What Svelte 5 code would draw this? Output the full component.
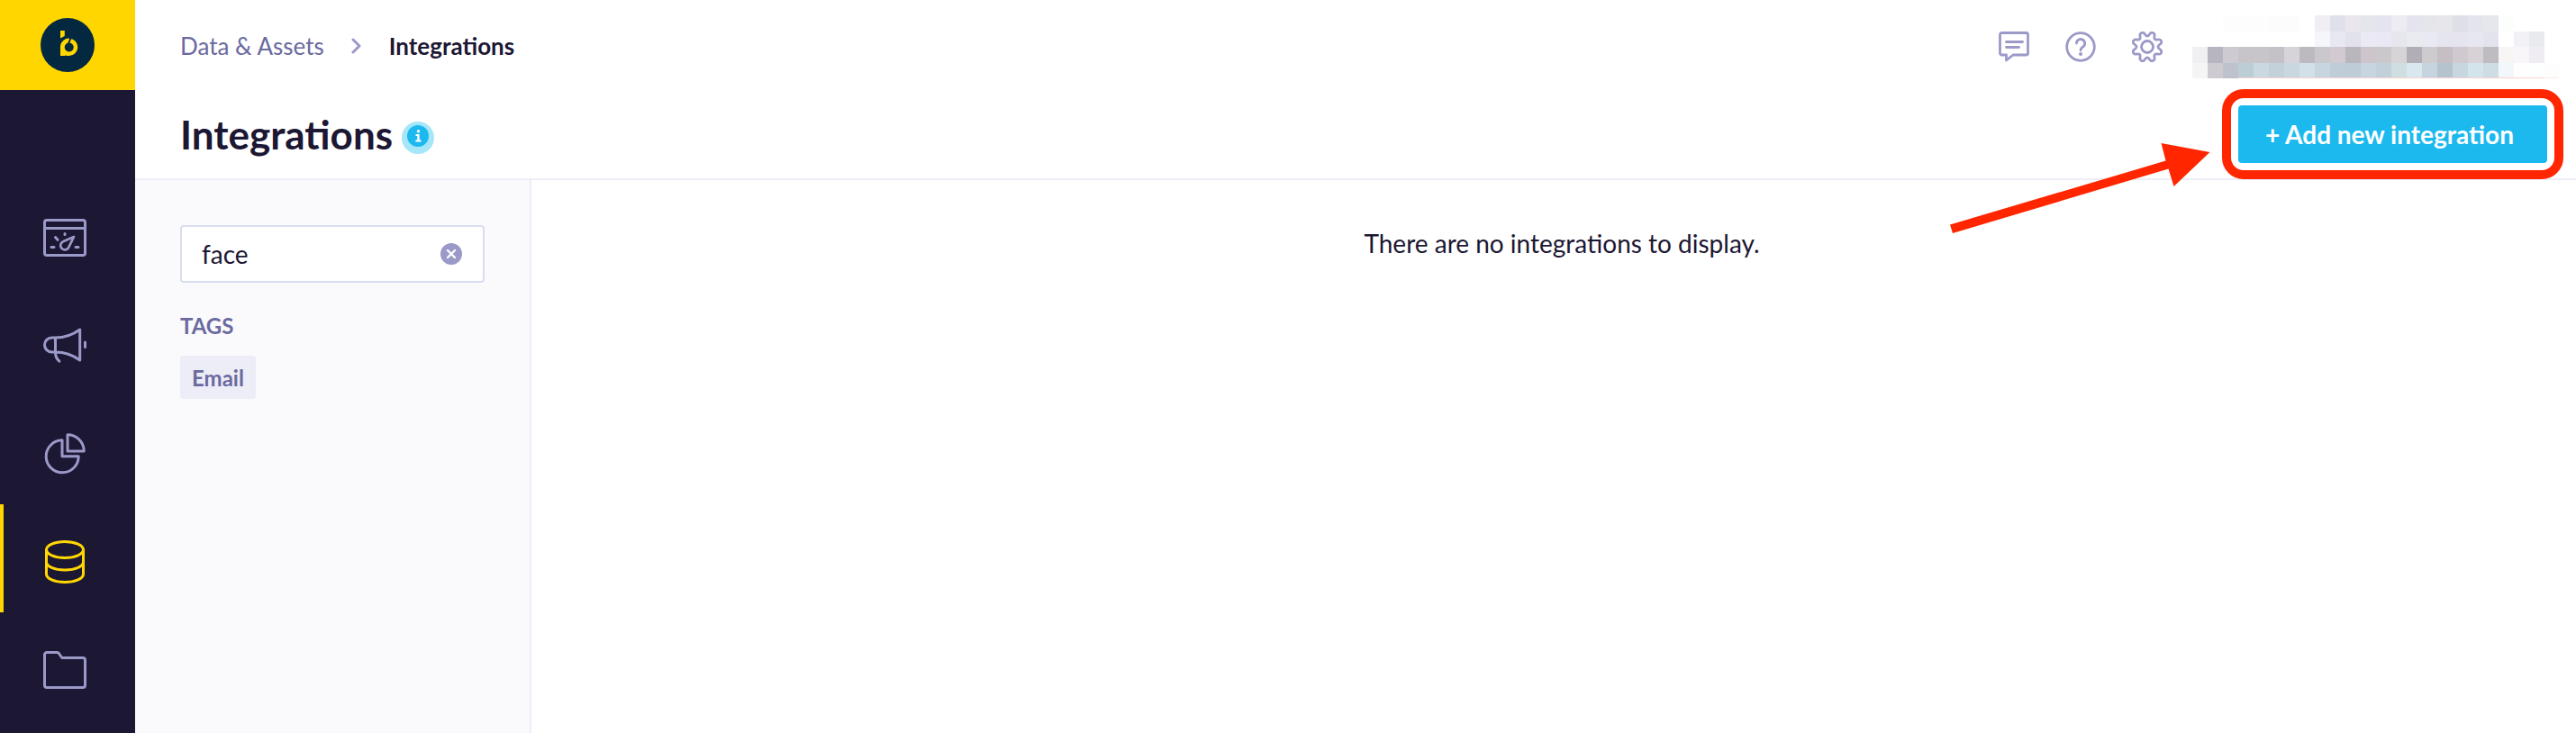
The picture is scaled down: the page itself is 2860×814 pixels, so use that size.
<script lang="ts">
  let search = $state('face');

  const tags = ['Email'];

  const navItems = [
    { id: 'dashboards', label: 'Dashboards' },
    { id: 'campaigns', label: 'Campaigns' },
    { id: 'analyses', label: 'Analyses' },
    { id: 'data', label: 'Data & Assets' },
    { id: 'files', label: 'Asset manager' }
  ];
  const active = 'data';

  // Redacted account name: one row of colours per line of blocks
  const blocks = [
    '- - fdfdfd fdfdfd fdfdfd fcfcfc fcfcfc - f0eef3 e0e0ea e9e7ed e5e6eb e3e4ee edecf2 e3e4ed e5e6eb e6e6eb dfdfe8 e4e4ef e6e7ec fcfefe - - -',
    '- - - - - - - - f5f6fb e8e8f2 e2e2ed eae9f4 e9e8f4 e6e6ef eaebf0 e9e9f3 e5e5f0 e5e4ef e7e7f2 e3e3ed - f2f1f7 e8eaee -',
    'f0f0f2 b7b5c0 cdcad1 c8c5ca c8c5ca c5c1c9 d6d4d8 bdb9c1 cbc8cd d1cad0 b9b6bd ccc5cc cac8cb d8d3d7 b1aeb6 cdcbce c5bec5 d0cad0 d8d2d6 bebcc1 f7f6f5 f8f6fa efedf3 -',
    'f5f5f5 cecbd0 bec2cc bccdd5 cad8e1 c2d1da c9d7e0 d2e0e7 c7d5df bfcdd9 bfccd8 c6d5df c1d0d9 d0dee2 d9e8ef c5d4de b5c3cf c8d6e0 d4e4eb cedde3 f1f7fa fefefe fdfefe fdfdfd'
  ].map((row) => row.split(' '));

  function gearPath(c: number) {
    const pts: number[][] = [];
    for (let i = 0; i < 8; i++) {
      const mid = i * 45 + 22.5;
      for (const [offset, r] of [[-8, 17], [8, 17], [16, 12], [29, 12]]) {
        const a = ((mid + offset) * Math.PI) / 180;
        pts.push([c + r * Math.cos(a), c + r * Math.sin(a)]);
      }
    }
    const half = (a: number[], b: number[]) => `${(a[0] + b[0]) / 2} ${(a[1] + b[1]) / 2}`;
    let d = `M${half(pts[pts.length - 1], pts[0])}`;
    pts.forEach((p, i) => {
      d += `Q${p[0]} ${p[1]} ${half(p, pts[(i + 1) % pts.length])}`;
    });
    return d + 'Z';
  }
</script>

<svelte:head>
  <title>Integrations</title>
</svelte:head>

<div class="app">
  <aside class="sidebar">
    <a class="sidebar__logo" href="#home" aria-label="Home">
      <svg width="60" height="60" viewBox="0 0 60 60">
        <circle cx="30" cy="30" r="30" fill="#032840" />
        <path d="M22 14h4.8v6L22 22.4z" fill="#ffd600" />
        <path d="M22 42V31a9.7 9.7 0 1 1 9.7 11z" fill="#ffd600" />
        <circle cx="31.7" cy="32.5" r="5" fill="#032840" />
        <path d="M31 28.5l2.6-6.5" stroke="#032840" stroke-width="2" />
        <path d="M27 42.5l1-1.5 1 1.5z" fill="#032840" />
      </svg>
    </a>

    <nav class="nav" aria-label="Main">
      {#each navItems as item}
        <a class="nav__item" class:nav__item--active={item.id === active} href="#{item.id}" aria-label={item.label}>
          <svg width="48" height="48" viewBox="0 0 48 48" fill="none" stroke="currentColor" stroke-width="3" stroke-linecap="round" stroke-linejoin="round">
            {#if item.id === 'dashboards'}
              <rect x="1.5" y="4.5" width="45" height="39" rx="2.5" />
              <path d="M2 13.5h44M9 34.5h3M36 34.5h3M24 19.5v1M13.5 23.5l2.5 2.8" />
              <path d="M34 23L22 28.2a4.8 4.8 0 1 0 6 7z" stroke-width="2.7" />
            {:else if item.id === 'campaigns'}
              <path d="M13.5 15h-4a8 8 0 0 0 0 16h4M13.5 15v16M13.5 15c10 0 19-3 27.2-9v34c-8.2-6-17.2-9-27.2-9 0 5 1.5 8 4.5 10.2M46.5 20v5.5" />
            {:else if item.id === 'analyses'}
              <path d="M21 8.8a18 18 0 1 0 18.2 18H21z" />
              <path d="M27 2.8A18.2 18.2 0 0 1 45.2 21H27z" />
            {:else if item.id === 'data'}
              <ellipse cx="24" cy="10.5" rx="20.5" ry="9" />
              <path d="M3.5 10.5v27c0 5 9 9 20.5 9s20.5-4 20.500-9v-27M3.5 24c0 5 9 9 20.5 9s20.5-4 20.500-9" />
            {:else}
              <path d="M1.5 7A2.5 2.5 0 0 1 4 4.5h11.5q1 0 1.8 1l3.5 5H44a2.5 2.5 0 0 1 2.500 2.500v28a2.5 2.5 0 0 1-2.500 2.500H4a2.5 2.5 0 0 1-2.500-2.500z" />
            {/if}
          </svg>
        </a>
      {/each}
    </nav>
  </aside>

  <div class="page">
    <header class="header">
      <div class="topbar">
        <nav class="breadcrumbs" aria-label="Breadcrumb">
          <a href="#data">Data &amp; Assets</a>
          <svg width="12" height="18" viewBox="0 0 12 18" fill="none" stroke="#9b99c8" stroke-width="3" stroke-linecap="round" stroke-linejoin="round">
            <path d="M2 2l7 7-7 7" />
          </svg>
          <span class="breadcrumbs__current" aria-current="page">Integrations</span>
        </nav>

        <div class="toolbar">
          <button type="button" class="icon-btn" aria-label="Feedback">
            <svg width="34" height="34" viewBox="0 0 34 34" fill="none" stroke="currentColor" stroke-width="2.8" stroke-linecap="round" stroke-linejoin="round">
              <path d="M3.5 1.5h27a2 2 0 0 1 2 2V24a2 2 0 0 1-2 2H16l-7.5 6V26h-5a2 2 0 0 1-2-2V3.5a2 2 0 0 1 2-2zM8.5 11.5h18M8.5 17.5h14" />
            </svg>
          </button>
          <button type="button" class="icon-btn" aria-label="Help">
            <svg width="34" height="34" viewBox="0 0 34 34" fill="none" stroke="currentColor" stroke-width="2.8" stroke-linecap="round">
              <circle cx="17" cy="17" r="15.3" />
              <path d="M12.500 13a4.6 4.6 0 1 1 6.800 4.200q-2.300 1.300-2.300 3.600" />
              <circle cx="17" cy="25" r="2" fill="currentColor" stroke="none" />
            </svg>
          </button>
          <button type="button" class="icon-btn" aria-label="Settings">
            <svg width="34" height="34" viewBox="0 0 34 34" fill="none" stroke="currentColor" stroke-width="2.8" stroke-linejoin="round">
              <path d={gearPath(17)} />
              <circle cx="17" cy="17" r="6.5" />
            </svg>
          </button>
          <svg class="account" width="408" height="70" viewBox="0 0 408 70" role="img" aria-label="Account" shape-rendering="crispEdges">
            {#each blocks as row, y}
              {#each row as color, x}
                {#if color !== '-'}
                  <rect x={x * 17} y={y * 17.5} width="17" height="17.5" fill="#{color}" />
                {/if}
              {/each}
            {/each}
            <rect x="51" y="69" width="340" height="1" fill="#f6d3cf" />
            <rect x="391" y="69" width="15" height="1" fill="#fde8e5" />
          </svg>
        </div>
      </div>

      <div class="titlebar">
        <h1>Integrations</h1>
        <button type="button" class="info" aria-label="About integrations">
          <svg width="36" height="36" viewBox="0 0 36 36">
            <circle cx="18" cy="18" r="18" fill="#a6e6f9" />
            <circle cx="18" cy="16" r="12" fill="#1cb9ef" />
            <circle cx="18.5" cy="10.8" r="1.7" fill="#fff" />
            <path d="M15.5 14h4.200v6.600h1.900v2h-6.200v-2h1.900V16h-1.800z" fill="#fff" />
          </svg>
        </button>

        <div class="add">
          <button type="button" class="add__btn">+ Add new integration</button>
          <span class="add__frame"></span>
          <svg class="add__arrow" width="289" height="100" viewBox="0 0 289 100" aria-hidden="true">
            <path d="M0 90.5L239.5 19.5 234.5 0 288.5 10 248.5 48 242.5 28.5 3 100z" fill="#ff2600" />
          </svg>
        </div>
      </div>
    </header>

    <div class="content">
      <section class="filters" aria-label="Filters">
        <div class="search">
          <input type="text" aria-label="Search integrations" bind:value={search} />
          <button type="button" class="search__clear" aria-label="Clear search" onclick={() => (search = '')}>
            <svg width="24" height="24" viewBox="0 0 24 24">
              <circle cx="12" cy="12" r="12" fill="#9b99c8" />
              <path d="M8 8l8 8M16 8l-8 8" stroke="#fff" stroke-width="2.4" stroke-linecap="round" />
            </svg>
          </button>
        </div>

        <h2>TAGS</h2>
        <div class="tags">
          {#each tags as tag}
            <button type="button" class="tag">{tag}</button>
          {/each}
        </div>
      </section>

      <main class="results">
        <p>There are no integrations to display.</p>
      </main>
    </div>
  </div>
</div>

<style>
  :global(body) {
    margin: 0;
  }

  .app {
    display: flex;
    min-height: 100vh;
    font-family: Lato, sans-serif;
    font-size: 28px;
    color: #1c1733;
    background: #fff;
  }

  button,
  input {
    font: inherit;
    color: inherit;
    box-sizing: border-box;
  }

  button {
    padding: 0;
    border: 0;
    background: none;
    cursor: pointer;
  }

  svg {
    display: block;
  }

  /* Sidebar */
  .sidebar {
    flex: 0 0 150px;
    background: #1c1733;
  }

  .sidebar__logo {
    display: flex;
    align-items: center;
    justify-content: center;
    height: 100px;
    margin-bottom: 100px;
    background: #ffd600;
  }

  .nav__item {
    display: block;
    padding: 40px 0 32px 44px;
    border-left: 4px solid transparent;
    color: #9b99c8;
  }

  .nav__item--active {
    border-left-color: #ffd600;
    color: #ffd600;
  }

  .page {
    display: flex;
    flex: 1;
    flex-direction: column;
    min-width: 0;
  }

  /* Header */
  .header {
    border-bottom: 2px solid #ededf8;
  }

  .topbar {
    display: flex;
    align-items: center;
    justify-content: space-between;
    box-sizing: border-box;
    height: 100px;
    padding: 4px 18px 0 50px;
  }

  .breadcrumbs {
    display: flex;
    align-items: center;
    gap: 30px;
    padding-bottom: 2px;
    font-size: 26px;
  }

  .breadcrumbs a {
    color: #6a6a9f;
    text-decoration: none;
  }

  .breadcrumbs__current {
    font-weight: 700;
  }

  .toolbar {
    display: flex;
    align-items: center;
    gap: 40px;
  }

  .icon-btn {
    color: #9b99c8;
  }

  .account {
    margin-left: -7px;
  }

  .titlebar {
    display: flex;
    align-items: center;
    height: 98px;
    padding: 0 32px 0 50px;
  }

  h1 {
    margin: 0;
    font-size: 44px;
    font-weight: 700;
  }

  .info {
    margin: 8px 0 0 10px;
  }

  .add {
    position: relative;
    margin-left: auto;
  }

  .add__btn {
    height: 64px;
    padding: 0 37px 0 30px;
    border-radius: 4px;
    background: #1cb9ef;
    color: #fff;
    font-weight: 700;
  }

  .add__frame {
    position: absolute;
    inset: -18px;
    border: 10px solid #ff2600;
    border-radius: 24px;
    pointer-events: none;
  }

  .add__arrow {
    position: absolute;
    top: 42px;
    right: 374px;
    pointer-events: none;
  }

  /* Content */
  .content {
    display: flex;
    flex: 1;
  }

  .filters {
    box-sizing: border-box;
    flex: 0 0 440px;
    padding: 50px;
    border-right: 2px solid #ededf8;
    background: #fafafd;
  }

  .search {
    position: relative;
  }

  .search input {
    display: block;
    width: 100%;
    height: 64px;
    padding: 0 60px 0 22px;
    border: 2px solid #d9ddf0;
    border-radius: 4px;
    background: #fff;
  }

  .search__clear {
    position: absolute;
    top: 20px;
    right: 25px;
  }

  h2 {
    margin: 32px 0 17px;
    font-size: 24px;
    line-height: 32px;
    font-weight: 700;
    color: #6a6a9f;
  }

  .tags {
    display: flex;
    flex-wrap: wrap;
    gap: 10px;
  }

  .tag {
    height: 48px;
    padding: 0 13px;
    border-radius: 4px;
    background: #ededf8;
    color: #6a6a9f;
    font-size: 24px;
    font-weight: 700;
  }

  .results {
    flex: 1;
    padding: 50px 32px 50px 50px;
    text-align: center;
  }

  .results p {
    margin: 0;
    line-height: 40px;
  }
</style>
